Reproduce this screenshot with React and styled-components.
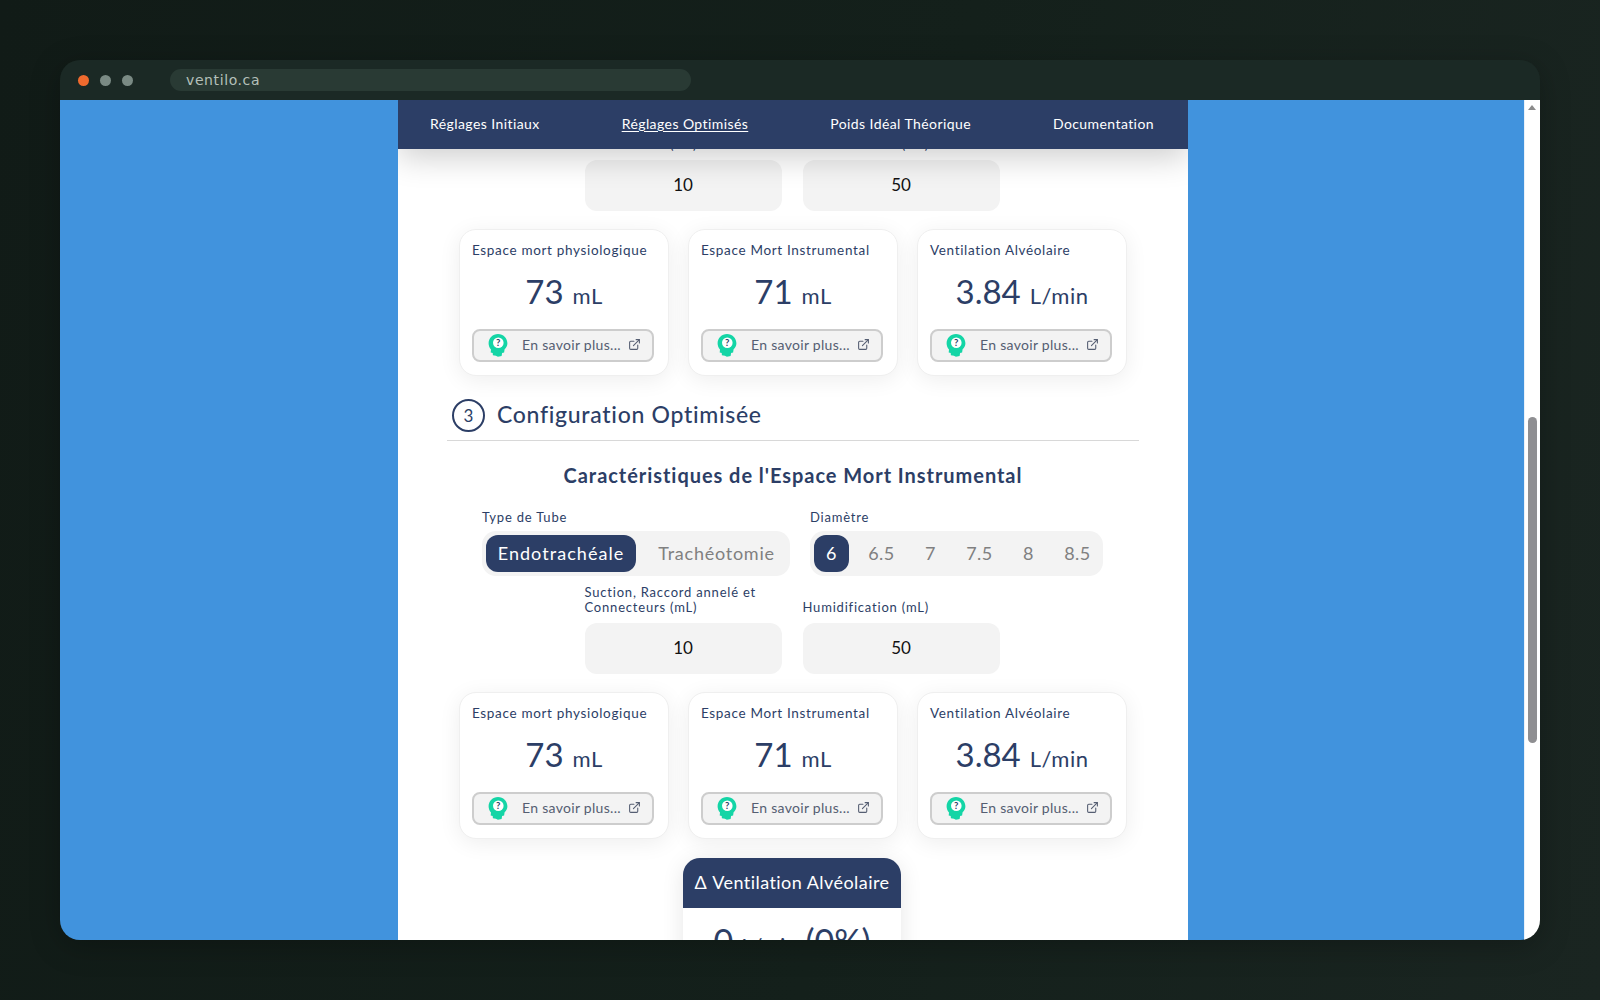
import React from "react";
import styled, { createGlobalStyle } from "styled-components";
import { ExternalLink } from "lucide-react";

const NAVY = "#2c3e66";
const FONT = `Lato, "Noto Sans", sans-serif`;

const GlobalStyle = createGlobalStyle`
  html, body {
    margin: 0;
    padding: 0;
    height: 1000px;
    overflow: hidden;
  }
  body {
    font-family: ${FONT};
    background: linear-gradient(100deg, #111b17 0%, #14201b 55%, #1a2521 100%);
  }
`;

const Stage = styled.div`
  height: 1000px;
  box-sizing: border-box;
  padding: 60px;
`;

const Window = styled.div`
  height: 880px;
  border-radius: 20px;
  overflow: hidden;
  display: flex;
  flex-direction: column;
  box-shadow: 0 6px 30px rgba(0, 0, 0, 0.25);
`;

const TitleBar = styled.div`
  height: 40px;
  flex: none;
  background: #1b2925;
  display: flex;
  align-items: center;
  padding-left: 18px;
`;

const Dot = styled.span`
  width: 11px;
  height: 11px;
  border-radius: 50%;
  margin-right: 11px;
  background: ${(p) => p.$color};
`;

const UrlBar = styled.div`
  width: 521px;
  height: 22px;
  margin-left: 26px;
  padding-left: 16px;
  box-sizing: border-box;
  border-radius: 11px;
  background: #293a34;
  color: #b4c0ba;
  font-family: "DejaVu Sans", sans-serif;
  font-size: 14px;
  letter-spacing: 0.6px;
  line-height: 23px;
`;

const Viewport = styled.div`
  flex: 1;
  min-height: 0;
  display: flex;
`;

const Page = styled.div`
  flex: 1;
  min-width: 0;
  box-sizing: border-box;
  padding-left: 2px;
  background: #4193dd;
  display: flex;
  justify-content: center;
`;

const Panel = styled.div`
  width: 790px;
  background: #fff;
  overflow: hidden;
  display: flex;
  flex-direction: column;
  color: ${NAVY};
`;

const Nav = styled.nav`
  height: 49px;
  flex: none;
  box-sizing: border-box;
  position: relative;
  z-index: 2;
  background: ${NAVY};
  box-shadow: 0 8px 32px rgba(0, 0, 0, 0.2);
  display: flex;
  align-items: center;
  justify-content: space-between;
  padding: 0 34px 2px 32px;
`;

const NavLink = styled.a`
  color: #fff;
  font-size: 14px;
  font-weight: 400;
  letter-spacing: 0.42px;
  text-decoration: ${(p) => (p.$active ? "underline" : "none")};
  text-underline-offset: 2px;
`;

const Body = styled.div`
  margin-top: -27px;
  padding: 0 50px 0 48px;
  display: flex;
  flex-direction: column;
  align-items: stretch;
`;

const InputsRow = styled.div`
  display: flex;
  justify-content: center;
  gap: 21px;
`;

const Field = styled.div`
  width: 197px;
  display: flex;
  flex-direction: column;
  justify-content: flex-end;
`;

const SmallLabel = styled.label`
  display: block;
  font-size: 13px;
  line-height: 15px;
  letter-spacing: 0.8px;
  color: ${NAVY};
`;

const NumberBox = styled.div`
  height: 51px;
  margin-top: 8px;
  border-radius: 12px;
  background: #f3f3f3;
  color: #111;
  font-size: 17px;
  line-height: 49px;
  text-align: center;
`;

const Cards = styled.div`
  margin-top: 18px;
  padding-left: 2px;
  display: flex;
  justify-content: center;
  gap: 19px;
`;

const Card = styled.div`
  width: 210px;
  height: 147px;
  box-sizing: border-box;
  padding: 12px 14px 13px 12px;
  border: 1px solid #efefef;
  border-radius: 17px;
  background: #fff;
  box-shadow: 0 4px 22px rgba(0, 0, 0, 0.07);
  display: flex;
  flex-direction: column;
`;

const CardTitle = styled.div`
  font-size: 13.5px;
  line-height: 16px;
  letter-spacing: 0.67px;
`;

const CardValue = styled.div`
  flex: 1;
  display: flex;
  align-items: baseline;
  justify-content: center;
  gap: 9px;
  padding: 12px 0 0 2px;
  font-size: 33px;
  line-height: 42px;
`;

const Unit = styled.span`
  font-size: 22px;
  letter-spacing: 0.5px;
`;

const MoreButton = styled.div`
  height: 33px;
  box-sizing: border-box;
  border: 2px solid #cdcdcd;
  border-radius: 8px;
  background: #f3f3f3;
  color: #555e72;
  font-size: 14px;
  letter-spacing: 0.3px;
  display: flex;
  align-items: center;
  padding: 0 11px 2px 13px;
  svg:last-child {
    margin-left: auto;
    flex: none;
  }
`;

const MoreText = styled.span`
  margin-left: 13px;
  white-space: nowrap;
`;

const SectionHead = styled.div`
  margin: 23px -1px 0 1px;
  padding: 0 5px 8px;
  border-bottom: 1px solid #d8d8d8;
  display: flex;
  align-items: center;
  gap: 12px;
`;

const StepBadge = styled.div`
  width: 33px;
  height: 33px;
  box-sizing: border-box;
  border: 2px solid ${NAVY};
  border-radius: 50%;
  display: flex;
  align-items: center;
  justify-content: center;
  font-size: 17px;
`;

const SectionTitle = styled.h2`
  margin: 0 0 4px;
  font-size: 23px;
  font-weight: 500;
  letter-spacing: 0.7px;
`;

const SubTitle = styled.h3`
  margin: 22px 0 0;
  padding-left: 2px;
  font-size: 20px;
  font-weight: 700;
  letter-spacing: 0.95px;
  line-height: 24px;
  text-align: center;
`;

const Pickers = styled.div`
  margin-top: 23px;
  display: flex;
  padding-left: 36px;
  gap: 20px;
`;

const PickerGroup = styled.div`
  display: flex;
  flex-direction: column;
`;

const Segmented = styled.div`
  margin-top: 6px;
  height: 45px;
  box-sizing: border-box;
  padding: 4px 1px 4px 4px;
  border-radius: 14px;
  background: #f3f3f3;
  display: flex;
  align-items: stretch;
  > :first-child {
    margin-right: 8px;
  }
`;

const Segment = styled.div`
  width: ${(p) => p.$width}px;
  box-sizing: border-box;
  padding-bottom: 2px;
  border-radius: 12px;
  display: flex;
  align-items: center;
  justify-content: center;
  font-size: 18px;
  letter-spacing: ${(p) => p.$spacing || 0.5}px;
  color: ${(p) => (p.$active ? "#fff" : "#808080")};
  background: ${(p) => (p.$active ? NAVY : "transparent")};
`;

const SecondInputs = styled(InputsRow)`
  margin-top: 9px;
`;

const DeltaCard = styled.div`
  width: 218px;
  margin: 19px auto 0;
  border-radius: 17px 17px 0 0;
  background: #fff;
  box-shadow: 0 4px 22px rgba(0, 0, 0, 0.1);
`;

const DeltaHead = styled.div`
  height: 50px;
  border-radius: 17px 17px 0 0;
  background: ${NAVY};
  color: #fff;
  font-size: 18px;
  letter-spacing: 0.45px;
  line-height: 49px;
  text-align: center;
`;

const DeltaValue = styled.div`
  padding-top: 12px;
  display: flex;
  justify-content: center;
  align-items: baseline;
  gap: 8px;
  font-size: 34px;
  line-height: 42px;
  white-space: nowrap;
`;

const DeltaUnit = styled.span`
  font-size: 22px;
`;

const Scrollbar = styled.div`
  width: 16px;
  flex: none;
  background: #fff;
  border-left: 1px solid #e8f1fa;
  box-sizing: border-box;
`;

const ArrowUp = styled.div`
  width: 0;
  margin: 5px 0 0 3px;
  border-left: 4.5px solid transparent;
  border-right: 4.5px solid transparent;
  border-bottom: 5px solid #8b8b8b;
`;

const Thumb = styled.div`
  width: 9px;
  height: 326px;
  margin: 307px 0 0 3px;
  border-radius: 5px;
  background: #8f8f92;
`;

const HeadIcon = () => (
  <svg width="22" height="24" viewBox="0 0 22 24" style={{ flex: "none" }}>
    <path
      d="M11 1C5.800 1 1.600 5.200 1.600 10.300c0 2.600.9 4.700 2.400 6.300l-.3 3 2 .4.2 2.300 3 .4 2 1 3.700-.6.5-3 2-.6.5-3.300C19.400 14.700 20.400 12.700 20.400 10.300 20.400 5.200 16.200 1 11 1Z"
      fill="#14d5a6"
    />
    <circle cx="11.300" cy="9.800" r="5.300" fill="#fff" />
    <text x="11.300" y="13.100" textAnchor="middle" fontSize="9.500" fontWeight="700" fill="#2c3e66" fontFamily="Lato, sans-serif">
      ?
    </text>
  </svg>
);

const InputPair = ({ as: Row = InputsRow }) => (
  <Row>
    <Field>
      <SmallLabel>Suction, Raccord annelé et Connecteurs (mL)</SmallLabel>
      <NumberBox>10</NumberBox>
    </Field>
    <Field>
      <SmallLabel>Humidification (mL)</SmallLabel>
      <NumberBox>50</NumberBox>
    </Field>
  </Row>
);

const stats = [
  { title: "Espace mort physiologique", value: "73", unit: "mL" },
  { title: "Espace Mort Instrumental", value: "71", unit: "mL" },
  { title: "Ventilation Alvéolaire", value: "3.84", unit: "L/min" },
];

const StatCards = () => (
  <Cards>
    {stats.map((s) => (
      <Card key={s.title}>
        <CardTitle>{s.title}</CardTitle>
        <CardValue>
          {s.value}
          <Unit>{s.unit}</Unit>
        </CardValue>
        <MoreButton>
          <HeadIcon />
          <MoreText>En savoir plus...</MoreText>
          <ExternalLink size={13} strokeWidth={2} />
        </MoreButton>
      </Card>
    ))}
  </Cards>
);

const diameters = [
  { v: "6", w: 35, active: true },
  { v: "6.5", w: 49 },
  { v: "7", w: 49 },
  { v: "7.5", w: 49 },
  { v: "8", w: 49 },
  { v: "8.5", w: 49 },
];

export default function App() {
  return (
    <>
      <GlobalStyle />
      <Stage>
        <Window>
          <TitleBar>
            <Dot $color="#ef6a2e" />
            <Dot $color="#7a8a84" />
            <Dot $color="#7a8a84" />
            <UrlBar>ventilo.ca</UrlBar>
          </TitleBar>
          <Viewport>
            <Page>
              <Panel>
                <Nav>
                  <NavLink>Réglages Initiaux</NavLink>
                  <NavLink $active>Réglages Optimisés</NavLink>
                  <NavLink>Poids Idéal Théorique</NavLink>
                  <NavLink>Documentation</NavLink>
                </Nav>
                <Body>
                  <InputPair />
                  <StatCards />
                  <SectionHead>
                    <StepBadge>3</StepBadge>
                    <SectionTitle>Configuration Optimisée</SectionTitle>
                  </SectionHead>
                  <SubTitle>Caractéristiques de l'Espace Mort Instrumental</SubTitle>
                  <Pickers>
                    <PickerGroup>
                      <SmallLabel>Type de Tube</SmallLabel>
                      <Segmented>
                        <Segment $active $width={150} $spacing={1.05}>Endotrachéale</Segment>
                        <Segment $width={145} $spacing={0.75}>Trachéotomie</Segment>
                      </Segmented>
                    </PickerGroup>
                    <PickerGroup>
                      <SmallLabel>Diamètre</SmallLabel>
                      <Segmented>
                        {diameters.map((d) => (
                          <Segment key={d.v} $active={d.active} $width={d.w}>
                            {d.v}
                          </Segment>
                        ))}
                      </Segmented>
                    </PickerGroup>
                  </Pickers>
                  <InputPair as={SecondInputs} />
                  <StatCards />
                  <DeltaCard>
                    <DeltaHead>Δ Ventilation Alvéolaire</DeltaHead>
                    <DeltaValue>
                      0<DeltaUnit>L/min</DeltaUnit>(0%)
                    </DeltaValue>
                  </DeltaCard>
                </Body>
              </Panel>
            </Page>
            <Scrollbar>
              <ArrowUp />
              <Thumb />
            </Scrollbar>
          </Viewport>
        </Window>
      </Stage>
    </>
  );
}
